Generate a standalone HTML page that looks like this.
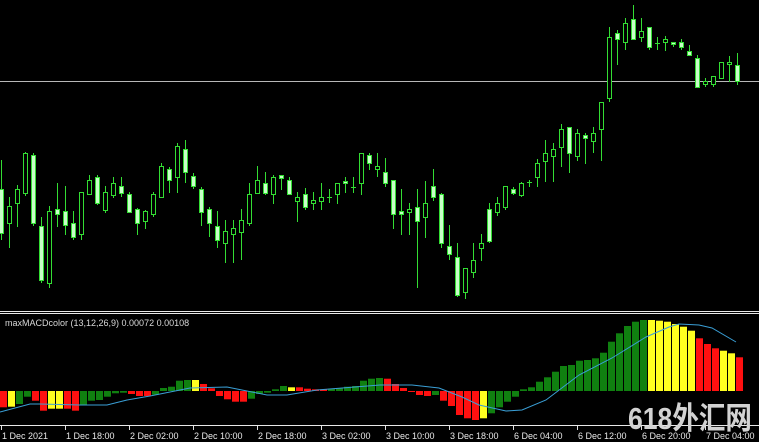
<!DOCTYPE html>
<html><head><meta charset="utf-8"><style>
html,body{margin:0;padding:0;background:#000;width:759px;height:442px;overflow:hidden;}
svg{display:block}
text{font-family:"Liberation Sans","DejaVu Sans",sans-serif;}
</style></head><body>
<svg id="s" width="759" height="442" viewBox="0 0 759 442" xmlns="http://www.w3.org/2000/svg">
<rect width="759" height="442" fill="#000"/>
<line x1="0" y1="81.5" x2="759" y2="81.5" stroke="#b8b8b8" stroke-width="1"/>
<g id="candles"></g>
<line x1="0" y1="311.5" x2="759" y2="311.5" stroke="#e8e8e8" stroke-width="1"/>
<line x1="0" y1="313.5" x2="759" y2="313.5" stroke="#e8e8e8" stroke-width="1"/>
<text x="5" y="326" font-size="9" fill="#d8d8d8">maxMACDcolor (13,12,26,9) 0.00072 0.00108</text>
<g id="bars"></g>
<polyline fill="none" stroke="#3a9fd6" stroke-width="1" points="0,412 30,404 40,404 80,405 107,405 127,400 150,396 190,388 227,387 247,391 267,395 287,395 317,390 380,385 412,385 439,388 462,397 479,405 506,411 522,410 546,400 579,375 612,358 646,337 669,327 679,324 699,325 712,328 736,342"/>
<line x1="0" y1="425.5" x2="759" y2="425.5" stroke="#e8e8e8" stroke-width="1"/>
<g fill="#e0e0e0">
<rect x="1" y="426" width="1" height="4"/><rect x="65" y="426" width="1" height="4"/><rect x="129" y="426" width="1" height="4"/><rect x="193" y="426" width="1" height="4"/><rect x="257" y="426" width="1" height="4"/><rect x="321" y="426" width="1" height="4"/><rect x="385" y="426" width="1" height="4"/><rect x="449" y="426" width="1" height="4"/><rect x="513" y="426" width="1" height="4"/><rect x="577" y="426" width="1" height="4"/><rect x="641" y="426" width="1" height="4"/><rect x="705" y="426" width="1" height="4"/>
</g>
<text x="628" y="429" font-size="31" font-weight="bold" fill="#d2d2d2" textLength="124" lengthAdjust="spacingAndGlyphs" style="font-family:'Liberation Sans','Noto Sans CJK SC',sans-serif">618外汇网</text>
<g font-size="9" fill="#e8e8e8">
<text x="2" y="439">1 Dec 2021</text>
<text x="66" y="439">1 Dec 18:00</text>
<text x="130" y="439">2 Dec 02:00</text>
<text x="194" y="439">2 Dec 10:00</text>
<text x="258" y="439">2 Dec 18:00</text>
<text x="322" y="439">3 Dec 02:00</text>
<text x="386" y="439">3 Dec 10:00</text>
<text x="450" y="439">3 Dec 18:00</text>
<text x="514" y="439">6 Dec 04:00</text>
<text x="578" y="439">6 Dec 12:00</text>
<text x="642" y="439">6 Dec 20:00</text>
<text x="706" y="439">7 Dec 04:00</text>
</g>
</svg>
<script>
var C=[
[189,233,160,240,1],[206,223,197,248,0],[189,203,185,227,0],[153,193,152,196,0],[155,223,153,226,1],[226,280,217,283,1],[211,283,206,288,0],[209,214,183,227,1],[211,225,186,235,1],[223,237,211,240,1],
[192,234,192,240,0],[180,194,175,195,0],[177,203,175,205,1],[192,210,186,213,0],[183,195,177,198,0],[186,193,177,197,1],[194,212,192,213,1],[209,223,208,235,1],[211,221,210,229,0],[194,214,192,217,0],
[166,197,163,198,0],[169,180,167,193,1],[146,177,143,193,0],[149,172,140,183,1],[176,186,173,189,1],[189,212,187,226,1],[209,223,207,237,1],[226,240,211,248,1],[231,243,220,263,0],[228,234,220,263,0],
[220,232,209,260,0],[194,223,183,226,0],[180,193,166,194,0],[183,193,172,195,1],[177,194,175,204,0],[175,178,175,190,1],[180,194,177,195,1],[197,201,192,222,0],[194,207,188,210,1],[200,203,192,210,0],
[197,201,183,210,0],[197,197,189,203,0],[183,194,183,204,0],[181,183,177,193,1],[187,187,177,193,0],[153,183,153,195,0],[155,163,153,170,1],[166,169,153,177,0],[172,183,158,187,1],[180,214,180,229,1],
[211,214,189,235,1],[209,212,203,235,0],[207,221,189,288,1],[203,217,181,238,0],[186,197,169,201,1],[194,243,193,248,1],[246,254,225,260,1],[257,295,243,297,1],[268,292,268,299,0],[260,272,243,278,0],
[243,248,234,261,0],[209,241,203,243,1],[203,212,197,216,0],[186,207,186,210,0],[189,193,187,195,1],[183,195,182,197,0],[182,182,180,187,0],[163,177,159,187,0],[153,161,140,182,0],[149,156,143,182,0],
[129,147,124,167,0],[127,153,127,173,1],[133,156,129,161,0],[135,138,133,164,1],[133,141,127,153,0],[102,129,102,161,0],[37,98,27,102,0],[33,39,30,65,1],[23,42,18,50,0],[19,39,5,39,1],
[31,37,18,42,0],[27,47,27,50,1],[43,43,37,50,0],[39,42,36,51,0],[42,44,42,47,1],[42,47,39,50,1],[51,55,45,55,1],[58,87,55,87,1],[81,84,78,87,0],[76,84,76,87,0],
[62,78,62,78,0],[62,64,56,82,0],[65,81,53,85,1]];
var ns="http://www.w3.org/2000/svg",h="";
C.forEach(function(c,i){var x=1+8*i;
h+='<line x1="'+(x+0.5)+'" y1="'+c[2]+'" x2="'+(x+0.5)+'" y2="'+c[3]+'" stroke="#33dd33" stroke-width="1"/>';
var t=c[0],b=c[1];if(b-t<1){h+='<line x1="'+(x-2)+'" y1="'+(t+0.5)+'" x2="'+(x+3)+'" y2="'+(t+0.5)+'" stroke="#33dd33"/>';}
else h+='<rect x="'+(x-1.5)+'" y="'+(t+0.5)+'" width="4" height="'+(b-t)+'" fill="'+(c[4]?'#c8ffc8':'#000')+'" stroke="#33dd33" stroke-width="1"/>';});
document.getElementById('candles').innerHTML=h;
// bars: zoom y values (z) -> y=300+z/3 ; color r/y/g
var B=[[322,'r'],[320,'y'],[312,'g'],[290,'g'],[302,'r'],[332,'r'],[326,'y'],[326,'y'],[326,'r'],[332,'r'],
[315,'g'],[302,'g'],[300,'g'],[290,'g'],[280,'g'],[278,'g'],[282,'r'],[288,'r'],[288,'r'],[284,'g'],
[264,'g'],[260,'g'],[242,'g'],[240,'g'],[240,'y'],[252,'r'],[265,'r'],[288,'r'],[298,'r'],[305,'r'],
[305,'r'],[296,'g'],[282,'g'],[278,'g'],[268,'g'],[258,'g'],[262,'y'],[262,'r'],[266,'r'],[268,'r'],
[268,'r'],[266,'g'],[264,'g'],[260,'g'],[258,'g'],[242,'g'],[236,'g'],[234,'g'],[236,'r'],[252,'r'],
[264,'r'],[276,'r'],[285,'r'],[288,'r'],[285,'g'],[302,'r'],[318,'r'],[345,'r'],[355,'r'],[360,'r'],
[355,'y'],[340,'g'],[322,'g'],[305,'g'],[290,'g'],[268,'g'],[262,'g'],[245,'g'],[232,'g'],[215,'g'],
[198,'g'],[195,'g'],[182,'g'],[180,'g'],[175,'g'],[158,'g'],[125,'g'],[100,'g'],[78,'g'],[65,'g'],
[60,'g'],[60,'y'],[62,'y'],[65,'y'],[72,'y'],[80,'y'],[92,'y'],[115,'r'],[132,'r'],[145,'r'],
[152,'y'],[160,'y'],[172,'r']];
var col={r:'#ff1010',y:'#ffff20',g:'#108010'};var z0=391,g="";
B.forEach(function(b,i){var y=300+b[0]/3;var t=Math.min(y,z0),hh=Math.max(1,Math.abs(y-z0));
g+='<rect x="'+(8*i)+'" y="'+t.toFixed(1)+'" width="7" height="'+hh.toFixed(1)+'" fill="'+col[b[1]]+'"/>';});
document.getElementById('bars').innerHTML=g;
</script>
</body></html>
